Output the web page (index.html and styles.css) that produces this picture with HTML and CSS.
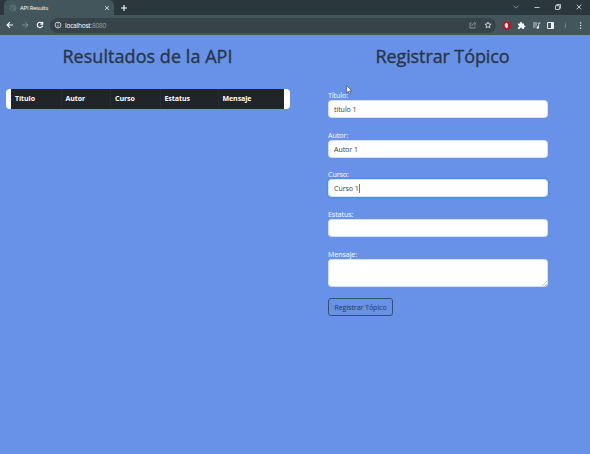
FILE: index.html
```html
<!DOCTYPE html>
<html lang="es">
<head>
<meta charset="utf-8">
<title>API Results</title>
<link rel="stylesheet" href="styles.css">
</head>
<body>
<header class="browser">
  <div class="tabbar">
    <div class="tab">
      <svg class="favicon" width="8" height="8" viewBox="0 0 8 8"><circle cx="4" cy="4" r="3"/><path d="M1.5 1.5L6.5 6.5M4 1v3h3"/></svg>
      <span class="tab-title">API Results</span>
      <svg class="tab-close" width="6" height="6" viewBox="0 0 6 6"><path d="M1 1l4 4M5 1L1 5"/></svg>
    </div>
    <svg class="new-tab" width="8" height="8" viewBox="0 0 8 8"><path d="M4 1v6M1 4h6"/></svg>
    <div class="window-controls">
      <svg class="dim" width="8" height="8" viewBox="0 0 8 8"><path d="M1.5 2.7L4 5.2l2.500-2.500"/></svg>
      <svg width="8" height="8" viewBox="0 0 8 8"><path d="M1.500 4.500h5"/></svg>
      <svg width="8" height="8" viewBox="0 0 8 8"><path d="M1.500 2.700h3.800v3.800H1.500zM2.700 2.500v-1h3.800v3.800h-1"/></svg>
      <svg width="8" height="8" viewBox="0 0 8 8"><path d="M1.700 1.700l4.600 4.600M6.300 1.700L1.700 6.300"/></svg>
    </div>
  </div>
  <div class="toolbar">
    <div class="nav">
      <svg class="strong" width="8" height="8" viewBox="0 0 8 8"><path d="M7 4H1.200M3.900 1.200L1.100 4l2.800 2.800"/></svg>
      <svg class="off" width="8" height="8" viewBox="0 0 8 8"><path d="M1 4h5.800M4.100 1.200L6.900 4 4.100 6.800"/></svg>
      <svg class="strong" width="8" height="8" viewBox="0 0 8 8"><path d="M6.600 4.600A2.700 2.700 0 1 1 6 2.100M6.700.8v2.300H4.400"/></svg>
    </div>
    <div class="address">
      <svg width="8" height="8" viewBox="0 0 8 8"><circle cx="4" cy="4" r="2.900"/><path d="M4 3.700v2M4 2.200v.8"/></svg>
      <span class="url">localhost<span class="port">:8080</span></span>
      <svg class="share" width="8" height="8" viewBox="0 0 8 8"><path d="M2.500 2H1v5h5V5.700M2.700 5C3 3.300 4 2.700 5.500 2.700M5 1l2 1.700-2 1.800"/></svg>
      <svg width="8" height="8" viewBox="0 0 8 8"><path d="M4 1l.9 2 2.200.2-1.700 1.400.5 2.200L4 5.700 2.100 6.800l.5-2.200L.9 3.200 3.100 3z"/></svg>
    </div>
    <div class="extensions">
      <svg width="9" height="9" viewBox="0 0 9 9"><path class="red" d="M2.800.5h3.400l2.300 2.300v3.400L6.200 8.500H2.800L.5 6.200V2.800z"/><path class="fill" d="M3 3.200l.8-1 .7-.5.7.5.7.7v3l-.8 1.200H4L2.700 5z"/></svg>
      <svg width="9" height="9" viewBox="0 0 9 9"><path class="fill" d="M1 2.500h2c-.4-2 2.400-2 2 0h2v2c2-.3 2 2.100 0 1.800V8H5.200C5.300 6.200 3 6.200 3 8H1V6.200c1.600 0 1.600-2 0-2z"/></svg>
      <svg width="9" height="9" viewBox="0 0 9 9"><path d="M1 2h4.500M1 4h4M1 6h2.500M6.700 6.500V2H8.500"/><circle class="fill" cx="5.800" cy="6.500" r="1.200"/></svg>
      <svg width="9" height="9" viewBox="0 0 9 9"><path class="panel" d="M1.500 1.500h6v6h-6z"/><path class="fill" d="M5 1.500h2.500v6H5z"/></svg>
      <svg class="off" width="9" height="9" viewBox="0 0 9 9"><path d="M4.500 1.500v1M4.500 3.500V6.200l-.8.8"/></svg>
      <svg width="9" height="9" viewBox="0 0 9 9"><path class="fill" d="M4 1.200h1.200v1.200H4zM4 3.900h1.200v1.200H4zM4 6.600h1.200v1.200H4z"/></svg>
    </div>
  </div>
</header>
<main class="page">
  <section class="results">
    <h1 class="heading heading-results">Resultados de la API</h1>
    <div class="table-card">
      <table class="table">
        <thead><tr><th class="c1">Título</th><th class="c2">Autor</th><th class="c3">Curso</th><th class="c4">Estatus</th><th class="c5">Mensaje</th></tr></thead>
      </table>
    </div>
  </section>
  <section class="register">
    <h1 class="heading heading-register">Registrar Tópico</h1>
    <form class="form">
      <div class="field"><label for="titulo">Título:</label><input id="titulo" type="text" value="titulo 1"></div>
      <div class="field"><label for="autor">Autor:</label><input id="autor" type="text" value="Autor 1"></div>
      <div class="field"><label>Curso:</label><div class="input focused">Curso 1<span class="caret"></span></div></div>
      <div class="field"><label for="estatus">Estatus:</label><input id="estatus" type="text"></div>
      <div class="field"><label>Mensaje:</label><div class="input area"><svg class="grip" width="5" height="5" viewBox="0 0 5 5"><path d="M0 5L5 0M3 5l2-2"/></svg></div></div>
      <button class="submit" type="button">Registrar Tópico</button>
    </form>
  </section>
</main>
<svg class="pointer" width="7" height="10" viewBox="0 0 7 10"><path d="M.6.6v7.200l1.700-1.500L3.400 9l1.200-.5-1.100-2.600h2.300z"/></svg>
</body>
</html>
```
FILE: styles.css
```css
* { box-sizing: border-box; }
body {
  margin: 0;
  height: 454px;
  overflow: hidden;
  background: #6792e8;
  font-family: "Open Sans", "Noto Sans", sans-serif;
  font-size: 7.1px;
  letter-spacing: -.08px;
  color: #212529;
}
svg { display: block; flex: none; fill: none; stroke: #e4e8ea; stroke-width: .8; }
svg .fill { fill: #f2f4f5; stroke: none; }
svg .red { fill: #c80f20; stroke: none; }
svg .panel { stroke-width: 1; }

.browser { height: 35px; background: #43565c; }
.tabbar { display: flex; align-items: center; height: 15px; background: #2b373d; }
.tab {
  display: flex;
  align-items: center;
  width: 110px;
  height: 15px;
  margin-left: 4px;
  padding: 0 4px 0 5px;
  border-radius: 5px 5px 0 0;
  background: #43565c;
}
.favicon { stroke: #69777c; }
.tab-title { margin-left: 3px; font-size: 6px; font-weight: 500; letter-spacing: -.24px; color: #fff; }
.tab-close { margin-left: auto; }
.new-tab { margin-left: 6px; stroke: #fff; stroke-width: 1.1; }
.window-controls { display: flex; gap: 13px; margin: -2px 7px 0 auto; }
.dim { stroke: #9ba5a9; }
.toolbar { display: flex; align-items: center; height: 20px; padding: 0 6px; }
.nav { display: flex; gap: 7px; }
.strong { stroke: #fff; stroke-width: 1.1; }
.off { stroke: #91a0a5; }
.address {
  display: flex;
  align-items: center;
  flex: 1;
  height: 15px;
  margin-left: 6px;
  padding: 0 4px;
  border-radius: 8px;
  background: #364348;
}
.url { margin-left: 3px; font-size: 6.6px; font-weight: 500; letter-spacing: -.24px; color: #fff; }
.port { color: #96a2a7; }
.share { margin: 0 7px 0 auto; stroke: #9ba7ab; }
.extensions { display: flex; gap: 5.8px; margin-left: 6px; margin-right: -1px; }

.page { display: grid; grid-template-columns: 295px 295px; }
.heading { margin: 9px 0 0; line-height: 24px; font-size: 18px; font-weight: 500; text-align: center; color: #293546; white-space: nowrap; -webkit-text-stroke: .35px #293546; }
.heading-results { letter-spacing: .05px; }
.heading-register { letter-spacing: -.1px; }
.table-card { width: 284.500px; height: 19.500px; margin: 21px 0 0 5.500px; padding: 0 5.500px; border-radius: 4px; background: #fff; }
.table { width: 273px; height: 19.500px; border-collapse: collapse; table-layout: fixed; background: #1f2529; color: #fff; }
.table th { padding: 0 0 0 4px; font-size: 7px; font-weight: 700; letter-spacing: -.06px; text-align: left; }
.table th + th { border-left: 1px solid #272d31; }
.c1 { width: 50px; }
.c2 { width: 49.500px; }
.c3 { width: 49.500px; }
.c4 { width: 58px; }
.form { width: 220px; margin: 22px 0 0 33px; }
.field { display: flex; flex-direction: column; margin-bottom: 11.700px; }
.field label { height: 10px; line-height: 10px; color: #fff; }
.field input, .input {
  display: flex;
  align-items: center;
  height: 18px;
  padding: 0 5px;
  border: 1px solid #d4dff5;
  border-radius: 3.500px;
  background: #fff;
  font: inherit;
  letter-spacing: inherit;
  color: #3c4044;
}
.field .focused { border-color: #d4e5fc; box-shadow: 0 0 0 1.500px #508be8; }
.caret { width: 1px; height: 9px; background: #777; }
.field .area { height: 28.500px; padding: 0; align-items: flex-end; justify-content: flex-end; }
.grip { stroke: #999; stroke-width: .6; }
.submit {
  display: block;
  width: 65px;
  height: 18px;
  margin-top: -1px;
  padding: 0;
  border: 1px solid #36506f;
  border-radius: 3px;
  background: transparent;
  font: inherit;
  letter-spacing: inherit;
  color: #28384f;
}
.pointer { position: absolute; left: 346px; top: 85px; fill: #fff; stroke: #30394a; stroke-width: .6; }
```
